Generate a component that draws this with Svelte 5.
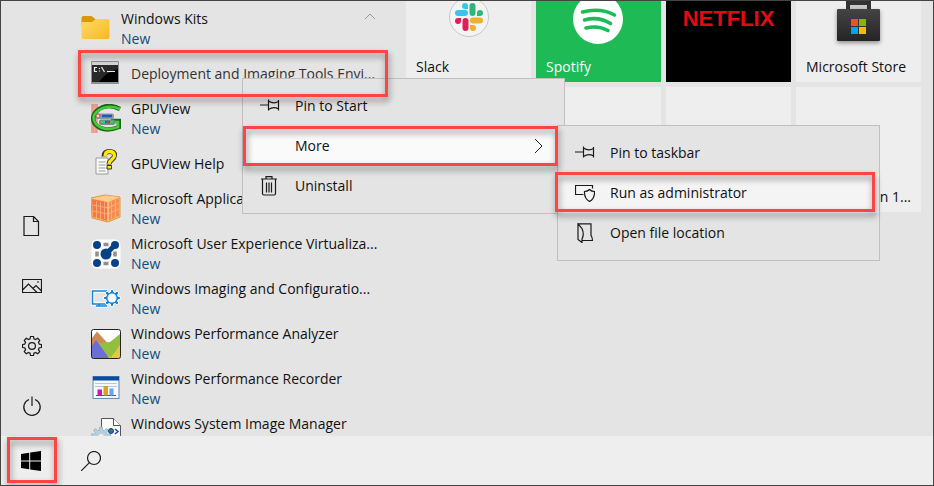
<script>
  const apps = [
    { name: 'Windows Kits', icon: 'folder', isNew: true, group: true },
    { name: 'Deployment and Imaging Tools Envi...', icon: 'console', current: true },
    { name: 'GPUView', icon: 'gpu', isNew: true },
    { name: 'GPUView Help', icon: 'help' },
    { name: 'Microsoft Application', icon: 'cube', isNew: true },
    { name: 'Microsoft User Experience Virtualiza...', icon: 'uev', isNew: true },
    { name: 'Windows Imaging and Configuratio...', icon: 'imaging', isNew: true },
    { name: 'Windows Performance Analyzer', icon: 'analyzer', isNew: true },
    { name: 'Windows Performance Recorder', icon: 'recorder', isNew: true },
    { name: 'Windows System Image Manager', icon: 'manager' }
  ];

  const rail = [
    { name: 'Documents', icon: 'file' },
    { name: 'Pictures', icon: 'picture' },
    { name: 'Settings', icon: 'gear' },
    { name: 'Power', icon: 'power' }
  ];

  const mainMenu = [
    { name: 'Pin to Start', icon: 'pin' },
    { name: 'More', more: true },
    { name: 'Uninstall', icon: 'trash' }
  ];
  const subMenu = [
    { name: 'Pin to taskbar', icon: 'pin' },
    { name: 'Run as administrator', icon: 'shield', active: true },
    { name: 'Open file location', icon: 'location' }
  ];

  function gear(cx, cy, outer, inner, teeth) {
    const pts = [];
    const step = (Math.PI * 2) / teeth;
    for (let i = 0; i < teeth; i++) {
      const a = i * step;
      for (const [d, r] of [[-0.34, inner], [-0.2, outer], [0.2, outer], [0.34, inner]]) {
        pts.push(`${(cx + Math.sin(a + d * step) * r).toFixed(2)},${(cy - Math.cos(a + d * step) * r).toFixed(2)}`);
      }
    }
    return pts.join(' ');
  }
</script>

{#snippet glyph(name)}
  <svg class="glyph" viewBox="0 0 20 20" aria-hidden="true">
    {#if name === 'file'}
      <path d="M2 .5h9.500l5 5v14H2zM11.500.5v5h5" />
    {:else if name === 'picture'}
      <path d="M.5 3.500h19v13H.5zM.5 14l6-6 8.500 8.500M11 12.500l3-3 5.500 5.500" /><path d="M15 6h2" />
    {:else if name === 'gear'}
      <polygon points={gear(10, 10, 9.6, 7.4, 8)} stroke-linejoin="round" /><circle cx="10" cy="10" r="3.400" />
    {:else if name === 'power'}
      <path d="M7 3.500a8.200 8.200 0 1 0 6 0M10 .5V10" />
    {:else if name === 'pin'}
      <path d="M0 9h8M8.500 3.500v11M8.500 5q5 3.500 10 .5v7.500q-5-3-10 .5M18.500 4v10.500" />
    {:else if name === 'trash'}
      <path d="M1 3h16M6 3V.6h6V3M2.500 3v14.500q0 1.500 1.500 1.500h10q1.500 0 1.500-1.500V3M6.500 6.500v10M9 6.500v10M11.500 6.500v10" />
    {:else if name === 'shield'}
      <path d="M8.500 11.500H.5v-9h17v3M14.500 6.500c1.500 1.500 3 2 5 2 .3 5-1.500 8-5 10-3.500-2-5.300-5-5-10 2 0 3.500-.5 5-2z" />
    {:else if name === 'location'}
      <path d="M3 .8h13v11.500q1.500 2 1.500 5.200H7.500M3 .8v15.700l4 3V16q2.500-4.500 0-10.500z" />
    {:else if name === 'search'}
      <circle cx="13" cy="7" r="6.500" /><path d="M8.400 11.600L0 20" />
    {:else if name === 'windows'}
      <path class="solid" d="M0 2.900l8.200-1.200v7.800H0zM9.200 1.500L20 0v9.500H9.200zM0 10.500h8.200v7.800L0 17.100zM9.200 10.500H20V20L9.200 18.500z" />
    {/if}
  </svg>
{/snippet}

{#snippet appIcon(name)}
  <svg class="app-icon" viewBox="0 0 30 30" aria-hidden="true">
    {#if name === 'folder'}
      <defs><linearGradient id="fold" x1="0" y1="0" x2="1" y2="1"><stop offset="0" stop-color="#ffdc6b" /><stop offset="1" stop-color="#f6b81c" /></linearGradient></defs>
      <path d="M.5 4q0-2 2-2h8l4 3v7H.5z" fill="#d9980b" />
      <path d="M.5 8h10.500l4-3h11.500q2 0 2 2v16q0 2-2 2h-24q-2 0-2-2z" fill="url(#fold)" />
    {:else if name === 'console'}
      <rect x="0" y="2" width="28" height="23" rx="1" fill="#8b9094" />
      <rect x="1" y="3" width="26" height="3" fill="#cfd5d9" />
      <rect x="1" y="6" width="26" height="17" fill="#000" />
      <path d="M1 6h26v4Q15 13 8 23H1z" fill="#292929" />
      <path d="M6 8.500H3.500v4H6M8.500 9v1M8.500 11.500v1M10.500 8l3 5M16 12.500h8" stroke="#eee" stroke-width="1.200" fill="none" />
    {:else if name === 'gpu'}
      <path d="M0 0h7v29H0z" fill="#f4a596" /><path d="M2 0v29M5 0v29" stroke="#e0988c" />
      <path d="M29 5Q17-1 8 5-1 12 4 20q8 9 24 3v-6h-8" fill="none" stroke="#176b19" stroke-width="4.500" />
      <path d="M29 5Q17 0 8 6-1 12 5 20q8 8 22 3v-5h-7" fill="none" stroke="#4cc83b" stroke-width="2.600" />
      <rect x="5" y="9.500" width="18" height="5.500" rx="2" fill="#8d98a0" /><path d="M11 12h10" stroke="#1758c8" stroke-width="2.500" />
      <rect x="8" y="15.500" width="16" height="5.500" rx="2" fill="#7b868e" /><path d="M10 18h12" stroke="#31d45b" stroke-width="2.500" /><path d="M14 18h5" stroke="#1d62c4" stroke-width="2.500" /><path d="M16 18h2" stroke="#e43b2c" stroke-width="2.500" />
      <circle cx="7" cy="12" r="2" fill="#ddd" stroke="#b55" />
    {:else if name === 'help'}
      <path d="M5 9h12v16H5z" fill="#fafafa" stroke="#999" /><path d="M7.500 13h7M7.500 16h7M7.500 19h7M7.500 22h7" stroke="#999" />
      <path d="M13 7.500q0-5 5.500-5T23.500 6.500c0 4-5.500 4-5.500 9" fill="none" stroke="#333" stroke-width="5" /><path d="M14 7.500q0-5 4.500-5T23.500 6.500c0 4-5.500 4-5.500 8.500" fill="none" stroke="#ffea00" stroke-width="3.300" />
      <path d="M16 16.500h4.500v3.500H16z" fill="#ffea00" stroke="#333" />
    {:else if name === 'cube'}
      <path d="M0 4l14-3 15 2v20l-12 5L1 24z" fill="#ffc470" stroke="#e0953a" />
      <path d="M1 5l16 3v19L2 23z" fill="#f4774a" /><path d="M17 8l11-4v18l-11 5z" fill="#f28d54" /><path d="M1 4.500l14-3 13 1.500-11 5z" fill="#ffcb8a" />
      <path d="M5.500 7v17M9.500 8v17M13.500 8v17M2 11l15 3 11-5M2 17l15 3 11-5M20.500 7v18M24.500 6v18" stroke="#ffb47c" stroke-width=".8" fill="none" />
      <path d="M17 8v19" stroke="#ffeab8" />
    {:else if name === 'uev'}
      <path d="M6 6h18v18H6zM24 6l-9 9" fill="none" stroke="#fff" stroke-width="11" stroke-linejoin="round" />
      <path d="M10 10h10v10H10z" fill="#e8eef5" />
      <path d="M12.500 5.500h5M12.500 24.500h5M6 12.500v5M24 12.500v5" stroke="#8e8e8e" stroke-width="3.500" />
      <g fill="#074287"><circle cx="6" cy="6" r="4" /><circle cx="24" cy="6" r="4" /><circle cx="6" cy="24" r="4" /><circle cx="24" cy="24" r="4" /><circle cx="15" cy="15" r="5.500" /></g>
      <path d="M15 15l9-9" stroke="#074287" stroke-width="5" />
    {:else if name === 'imaging'}
      <path d="M16 7H1.500v13H16M5 22h11M8 20v2" fill="none" stroke="#fff" stroke-width="3.500" />
      <path d="M16 7H1.500v13H16M5 22h11M8 20v2" fill="none" stroke="#1683d8" stroke-width="1.500" />
      <polygon points={gear(21, 14, 8.5, 6.3, 8)} fill="#1683d8" stroke="#fff" /><circle cx="21" cy="14" r="4.500" fill="#f4f8fb" />
    {:else if name === 'analyzer'}
      <rect x=".5" y=".5" width="29" height="29" rx="2" fill="#fff" />
      <path d="M1 9l5-6.500 10 11-6 8-9-4z" fill="#d08a56" /><path d="M8 14l11-1 10-8v12L20 29h-8z" fill="#93bf40" /><path d="M29 16l-8 12-5-1v2h13z" fill="#e6c445" /><path d="M1 17l4-6 13 18H1z" fill="#6a6ed6" />
      <rect x=".5" y=".5" width="29" height="29" rx="2" fill="none" stroke="#222" />
    {:else if name === 'recorder'}
      <rect x="2" y="2.500" width="26" height="22" fill="#f4f8ff" stroke="#6888b0" /><path d="M2 2.500h26v4H2z" fill="#0b4d9b" />
      <path d="M4 9.500h22M4 12.500h22" stroke="#b4c7e0" /><path d="M5 21.500h20" stroke="#456" />
      <path d="M6.500 15.500h4.500v6H6.500z" fill="#d313c0" /><path d="M12.500 12h4.500v9.500h-4.500z" fill="#dca316" /><path d="M18.500 14.500h4v7h-4z" fill="#68a5ed" />
    {:else if name === 'manager'}
      <path d="M10.500.5h12l7 7V30h-19z" fill="#fafafa" stroke="#555" /><path d="M22.500.5v7h7" fill="#fff" stroke="#555" />
      <polygon points={gear(10, 19, 10, 7, 9)} fill="#b8cedd" stroke="#9fb8ca" /><circle cx="10" cy="19" r="3" fill="#eee" />
      <circle cx="20" cy="13" r="2.500" fill="#238a4c" stroke="#1c37b0" /><path d="M24 11l3 2.500-3 2.500" fill="none" stroke="#223cc0" stroke-width="1.500" />
    {/if}
  </svg>
{/snippet}

<div class="desktop">
  <main>
    <nav class="rail" aria-label="Shortcuts">
      {#each rail as item}
        <button aria-label={item.name}>{@render glyph(item.icon)}</button>
      {/each}
    </nav>

    <section class="apps" aria-label="Apps">
      {#each apps as app}
        <button class="app" class:group={app.group} class:current={app.current}>
          {@render appIcon(app.icon)}
          <span class="caption"><span>{app.name}</span>{#if app.isNew}<span class="new">New</span>{/if}</span>
          {#if app.group}
            <svg class="caret" viewBox="0 0 12 8" aria-hidden="true"><path d="M1 7l5-5 5 5" /></svg>
          {/if}
        </button>
      {/each}
    </section>

    <section class="tiles" aria-label="Tiles">
      <button class="tile">
        <svg viewBox="0 0 125 81" aria-hidden="true">
          <circle cx="63" cy="16" r="19.500" fill="#f4f4f4" stroke="#c8c8c8" />
          <g stroke-width="6" stroke-linecap="round">
            <path d="M52 12h7" stroke="#36c5f0" /><path d="M66.500 5v7" stroke="#2eb67d" />
            <path d="M67 19.500h7" stroke="#ecb22e" /><path d="M59.500 20v7" stroke="#e01e5a" />
          </g>
          <path d="M62 8h-3a3 3 0 1 1 3-3z" fill="#36c5f0" /><path d="M71 15v-3a3 3 0 1 1 3 3z" fill="#2eb67d" />
          <path d="M64 24h3a3 3 0 1 1-3 3z" fill="#ecb22e" /><path d="M55 17v3a3 3 0 1 1-3-3z" fill="#e01e5a" />
        </svg>
        <span>Slack</span>
      </button>
      <button class="tile spotify">
        <svg viewBox="0 0 125 81" aria-hidden="true">
          <circle cx="62" cy="18" r="25" fill="#fff" />
          <path d="M46.500 11q18-4.500 32 3M48.500 19q14-4 26 3.500M50 27q12-3 22 2.500" fill="none" stroke="#1eba55" stroke-width="3.600" stroke-linecap="round" />
        </svg>
        <span>Spotify</span>
      </button>
      <button class="tile netflix"><strong>NETFLIX</strong></button>
      <button class="tile">
        <svg viewBox="0 0 125 81" aria-hidden="true">
          <defs><linearGradient id="bag" x1="0" y1="0" x2="0" y2="1"><stop offset="0" stop-color="#444" /><stop offset="1" stop-color="#242424" /></linearGradient></defs>
          <path d="M52 10V2h21v8" fill="#c9c9c9" stroke="#333" stroke-width="4" />
          <rect class="bag" x="41" y="8" width="43" height="32" rx="1" fill="url(#bag)" />
          <path d="M55 18h7v7h-7z" fill="#f25022" /><path d="M63 18h7v7h-7z" fill="#7fba00" /><path d="M55 26h7v7h-7z" fill="#00a4ef" /><path d="M63 26h7v7h-7z" fill="#ffb900" />
        </svg>
        <span>Microsoft Store</span>
      </button>
      <div class="tile"></div>
      <div class="tile"></div>
      <div class="tile"></div>
      <button class="tile trailing"><span>n 1...</span></button>
    </section>
  </main>

  <footer>
    <button aria-label="Start">{@render glyph('windows')}</button>
    <button aria-label="Search">{@render glyph('search')}</button>
  </footer>

  <div class="menu first" role="menu">
    {#each mainMenu as item}
      <button role="menuitem" class:open={item.more}>
        {@render glyph(item.icon)}<span>{item.name}</span>
        {#if item.more}<svg class="arrow" viewBox="0 0 12 16" aria-hidden="true"><path d="M2 1l7 7-7 7" /></svg>{/if}
      </button>
    {/each}
  </div>

  <div class="menu second" role="menu">
    {#each subMenu as item}
      <button role="menuitem" class:active={item.active}>{@render glyph(item.icon)}<span>{item.name}</span></button>
    {/each}
  </div>

  <div class="mark mark-app"></div>
  <div class="mark mark-more"></div>
  <div class="mark mark-admin"></div>
  <div class="mark mark-start"></div>
</div>

<style>
  .desktop {
    position: relative;
    box-sizing: border-box;
    height: 100vh;
    display: flex;
    flex-direction: column;
    overflow: hidden;
    border: 1px solid #444;
    background: #e4e4e4;
    color: #111;
    font: 14px/20px "Open Sans", "Noto Sans", sans-serif;
  }
  button {
    margin: 0;
    padding: 0;
    border: 0;
    background: none;
    color: inherit;
    font: inherit;
    text-align: left;
  }
  svg { display: block; flex: none; }
  .glyph { width: 20px; height: 20px; fill: none; stroke: #1a1a1a; stroke-width: 1.2; }
  .glyph .solid { fill: #000; stroke: none; }

  main { flex: 1; min-height: 0; display: flex; overflow: hidden; }
  .rail { flex: none; width: 62px; display: flex; flex-direction: column; justify-content: flex-end; }
  .rail button { height: 60px; display: grid; place-items: center; }

  .apps { flex: 0 0 341px; min-width: 0; padding-top: 5px; }
  .app {
    box-sizing: border-box;
    width: 100%;
    height: 45px;
    padding: 0 28px;
    display: flex;
    align-items: center;
    gap: 10px;
    white-space: nowrap;
  }
  .group { padding-left: 18px; }
  .current { color: #333; }
  .app:last-child { align-items: flex-start; padding-top: 3px; }
  .app:last-child .app-icon { margin-top: 4px; }
  .app-icon { width: 30px; height: 30px; }
  .caption { flex: 1; display: flex; flex-direction: column; }
  .new { color: #0f4c7f; }
  .caret { align-self: flex-start; width: 12px; height: 8px; margin-top: 6px; fill: none; stroke: #999; }

  .tiles {
    flex: 1;
    display: grid;
    grid-template-columns: repeat(4, minmax(0, 125px));
    grid-template-rows: 81px 125px;
    gap: 5px;
    padding-left: 2px;
    padding-right: 12px;
  }
  .tile { display: grid; overflow: hidden; background: #eee; }
  .tile > * { grid-area: 1 / 1; }
  .tile svg { width: 100%; height: 81px; }
  .tile span { align-self: end; padding: 0 10px 5px; white-space: nowrap; }
  .spotify { background: #1eba55; color: #fff; }
  .netflix { background: #000; }
  .netflix strong {
    justify-self: center;
    padding-top: 4px;
    color: #e50914;
    font: bold 22px/28px "Liberation Sans", sans-serif;
  }
  .trailing span { justify-self: end; }
  .bag { filter: drop-shadow(0 2px 2px rgb(0 0 0 / 40%)); }

  footer { flex: none; height: 49px; display: flex; background: #eee; }
  footer button { width: 60px; display: grid; place-items: center; }

  .menu {
    position: absolute;
    box-sizing: border-box;
    width: 323px;
    padding: 7px 0;
    border: 1px solid #c0c0c0;
    background: #e4e4e4;
  }
  .first { left: 241px; top: 77px; }
  .second { left: 556px; top: 124px; }
  .menu button {
    box-sizing: border-box;
    width: 100%;
    height: 40px;
    padding: 0 19px 0 17px;
    display: flex;
    align-items: center;
    gap: 15px;
  }
  .menu span { flex: 1; }
  .menu .open { background: #fafafa; }
  .menu .active { background: #f4f4f4; }
  .arrow { width: 12px; height: 16px; fill: none; stroke: #222; }

  .mark {
    position: absolute;
    box-sizing: border-box;
    border: 3px solid #ff4444;
    pointer-events: none;
    filter: drop-shadow(1px 4px 3px rgb(0 0 0 / 45%));
  }
  .mark-app { left: 77px; top: 49px; width: 310px; height: 47px; }
  .mark-more { left: 242px; top: 125px; width: 315px; height: 40px; }
  .mark-admin { left: 554px; top: 171px; width: 320px; height: 40px; }
  .mark-start { left: 6px; bottom: 2px; width: 50px; height: 46px; }
</style>
